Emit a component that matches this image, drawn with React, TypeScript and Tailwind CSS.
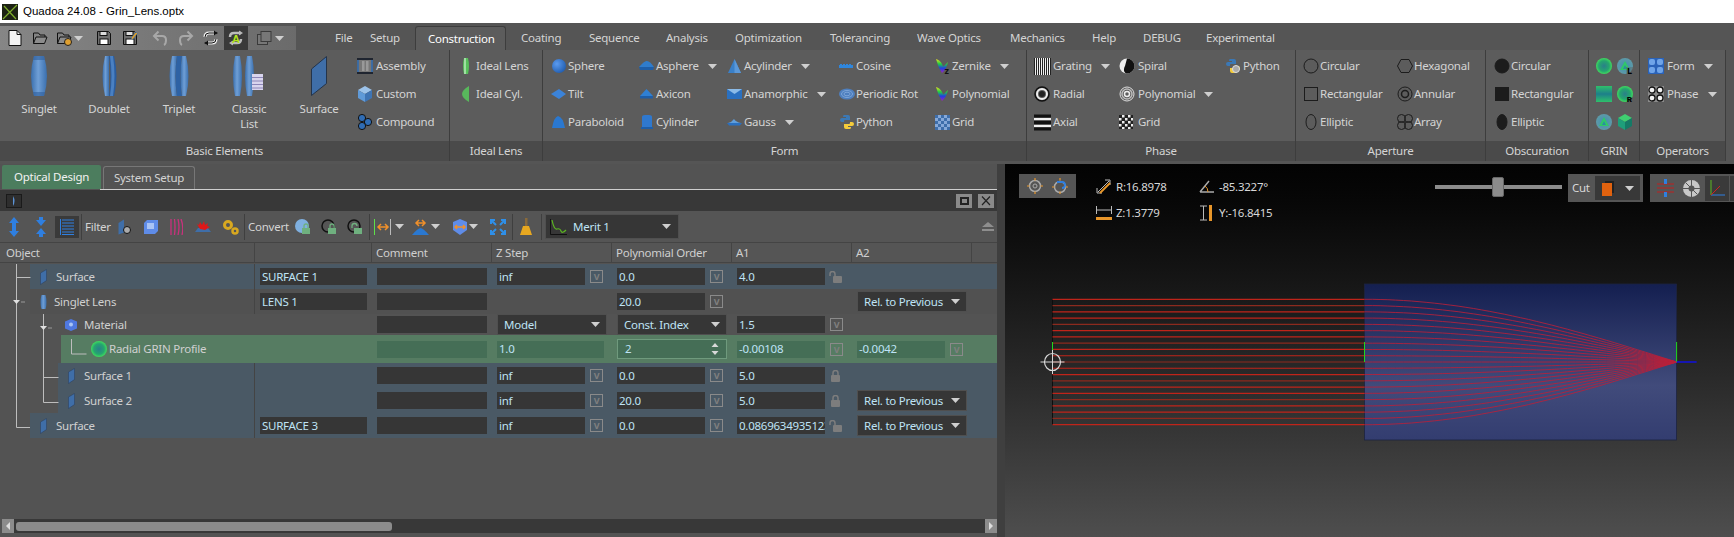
import type { ReactNode } from "react";

const FONT = "font-['Noto_Sans','Open_Sans',sans-serif]";

function Svg({ w = 16, h = 16, className = "", children }: { w?: number; h?: number; className?: string; children: ReactNode }) {
  return (
    <svg width={w} height={h} viewBox={`0 0 ${w} ${h}`} className={`shrink-0 ${className}`} fill="none">
      {children}
    </svg>
  );
}

function Defs() {
  return (
    <svg className="absolute h-0 w-0">
      <defs>
        <linearGradient id="lens" x1="0" x2="1" y1="0" y2="0">
          <stop offset="0" stopColor="#3a6fae" />
          <stop offset="0.45" stopColor="#6f9fd6" />
          <stop offset="1" stopColor="#3a6fae" />
        </linearGradient>
        <radialGradient id="ball" cx="0.35" cy="0.35" r="0.8">
          <stop offset="0" stopColor="#5b9bf0" />
          <stop offset="1" stopColor="#1a56a8" />
        </radialGradient>
        <radialGradient id="grin" cx="0.5" cy="0.5" r="0.5">
          <stop offset="0" stopColor="#2a7f8a" />
          <stop offset="0.65" stopColor="#25a56f" />
          <stop offset="1" stopColor="#3fdc5e" />
        </radialGradient>
        <radialGradient id="grinCone" cx="0.5" cy="0.5" r="0.5">
          <stop offset="0" stopColor="#3f8fb0" />
          <stop offset="1" stopColor="#5e9aa8" />
        </radialGradient>
        <linearGradient id="grinV" x1="0" x2="0" y1="0" y2="1">
          <stop offset="0" stopColor="#2fc06a" />
          <stop offset="0.5" stopColor="#1d7f8a" />
          <stop offset="1" stopColor="#2fc06a" />
        </linearGradient>
        <linearGradient id="rainbow" x1="0" x2="0" y1="0" y2="1">
          <stop offset="0" stopColor="#e8e020" />
          <stop offset="0.35" stopColor="#20d040" />
          <stop offset="0.65" stopColor="#2040e0" />
          <stop offset="1" stopColor="#a020c0" />
        </linearGradient>
        <linearGradient id="blueRect" x1="0" x2="0" y1="0" y2="1">
          <stop offset="0" stopColor="#141f50" />
          <stop offset="0.65" stopColor="#414b7b" />
          <stop offset="1" stopColor="#333d70" />
        </linearGradient>
      </defs>
    </svg>
  );
}

function Caret({ className = "" }: { className?: string }) {
  return (
    <svg width="9" height="5" viewBox="0 0 9 5" className={`shrink-0 ${className}`}>
      <path d="M0 0h9L4.500 5z" fill="#cfcfcf" />
    </svg>
  );
}

/* ---- large lenses ---- */
const LensSinglet = () => (
  <Svg w={16} h={40}>
    <path d="M3 0h10q6 20 0 40H3Q-3 20 3 0z" fill="url(#lens)" />
    <path d="M3 0h10l1 4H2zM2 36h12l-1 4H3z" fill="#2f5f9c" fillOpacity="0.6" />
  </Svg>
);
const LensDoublet = () => (
  <Svg w={15} h={40}>
    <path d="M3 0h4v40H3Q-2 20 3 0z" fill="url(#lens)" />
    <path d="M7 0h5q5 20 0 40H7q3-20 0-40z" fill="#2a5da0" />
    <path d="M8 0h3q3 20 0 40H8q3-20 0-40z" fill="#4a80c2" />
  </Svg>
);
const LensTriplet = () => (
  <Svg w={20} h={40}>
    <path d="M3 0h5q-3 20 0 40H3Q-2 20 3 0z" fill="url(#lens)" />
    <path d="M8 0h5q-3 20 0 40H8q-3-20 0-40z" fill="#2e62a4" />
    <path d="M13 0h4q5 20 0 40h-4q-3-20 0-40z" fill="url(#lens)" />
  </Svg>
);
const LensClassic = () => (
  <Svg w={32} h={40}>
    <path d="M2 0h5q4 20 0 40H2Q-2 20 2 0z" fill="url(#lens)" />
    <path d="M14 0h5q4 20 0 40h-5q-4-20 0-40z" fill="url(#lens)" />
    <rect x="19" y="18" width="11" height="16" fill="#d9d5ee" />
    <path d="M19 21.500h11M19 25h11M19 28.500h11M19 32h11" stroke="#8d86b8" />
  </Svg>
);
const SurfaceBig = () => (
  <Svg w={16} h={40}>
    <path d="M.5 13 15.500.5v27L.5 39.500z" fill="#3f6ea8" stroke="#24344a" />
  </Svg>
);

/* ---- ribbon small icons ---- */
const Assembly = () => (
  <Svg w={16} h={16}>
    <rect x="0.500" y="1" width="15" height="14" fill="#777" />
    <rect x="5" y="3" width="2.500" height="10" fill="#999" />
    <rect x="9" y="3" width="2.500" height="10" fill="#999" />
    <path d="M0 1h16M0 15h16" stroke="#1f2530" strokeWidth="2" />
    <path d="M1 2v12M15 2v12" stroke="#2d6bb3" strokeWidth="1.500" />
  </Svg>
);
const CubeIcon = ({ a = "#5f9ad8", b = "#9cc3ea", c = "#3e74b4" }: { a?: string; b?: string; c?: string }) => (
  <Svg w={16} h={16}>
    <path d="M8 0l7 4-7 4-7-4z" fill={b} />
    <path d="M1 4l7 4v8l-7-4z" fill={a} />
    <path d="M15 4l-7 4v8l7-4z" fill={c} />
  </Svg>
);
const Compound = () => (
  <Svg w={16} h={16}>
    {[[5, 4], [11, 8], [5, 12]].map(([x, y]) => (
      <circle key={`${x}${y}`} cx={x} cy={y} r="3.600" fill="#2f6cb4" stroke="#111" />
    ))}
  </Svg>
);
const IdealLens = () => (
  <Svg w={8} h={18}>
    <path d="M2 1h4q2 8 0 16H2Q0 9 2 1z" fill="#58c05c" />
    <rect x="2" y="1" width="2" height="16" fill="#9fe0a2" />
  </Svg>
);
const IdealCyl = () => (
  <Svg w={8} h={18}>
    <path d="M7 1v16Q0 13 0 9T7 1z" fill="#58b85c" />
  </Svg>
);
const Sphere = () => (
  <Svg>
    <circle cx="8" cy="8" r="7" fill="url(#ball)" />
  </Svg>
);
const Tilt = () => (
  <Svg>
    <path d="M0 8l8-5 7 5-7 5z" fill="#3b83d9" />
  </Svg>
);
const Paraboloid = () => (
  <Svg>
    <path d="M1 14Q3 3 7 2q5 1 7 12z" fill="#2a78d0" />
  </Svg>
);
const Asphere = () => (
  <Svg>
    <path d="M0 9Q6 2 8 3q3 0 7 6z" fill="#2f7ccc" />
    <path d="M0 9h15l-1 3H1z" fill="#1e5ea8" />
  </Svg>
);
const Axicon = () => (
  <Svg>
    <path d="M1 10l6.500-7L14 10z" fill="#2f80d4" />
    <path d="M1 10h13v2.500H1z" fill="#1e5ea8" />
  </Svg>
);
const Cylinder = () => (
  <Svg>
    <path d="M3 3q0-2 3-2h4q3 0 3 2v10H3z" fill="#2f78ce" />
    <path d="M2 13h12v2H2z" fill="#1e5ea8" />
  </Svg>
);
const Acylinder = () => (
  <Svg>
    <path d="M1 15 7.500 1 14 15z" fill="#3a80c8" />
    <path d="M7.500 1 14 15H7.500z" fill="#5b98d8" />
  </Svg>
);
const Anamorphic = () => (
  <Svg>
    <path d="M0 3h15v10H0z" fill="#2a70c0" />
    <path d="M0 3l7.500 5L15 3z" fill="#8bbbe8" />
  </Svg>
);
const Gauss = () => (
  <Svg>
    <path d="M1 9q4-1 6-4 2 3 7 4z" fill="#5f9edc" />
    <path d="M0 9h15l-2 2.500H2z" fill="#2a70c0" />
  </Svg>
);
const Cosine = () => (
  <Svg>
    <path d="M0 7h1v-1h2v1h1v-1h2v1h1v-1h2v1h1v-1h2v1h2v3H0z" fill="#2f86dc" />
  </Svg>
);
const PeriodicRot = () => (
  <Svg>
    <ellipse cx="8" cy="8" rx="8" ry="5.500" fill="#4e7fbe" />
    <ellipse cx="8" cy="8" rx="5.500" ry="3.500" stroke="#7ba4d8" />
    <ellipse cx="8" cy="8" rx="3" ry="1.800" stroke="#7ba4d8" />
  </Svg>
);
const PythonLogo = ({ gear = false }: { gear?: boolean }) => (
  <Svg>
    <path d="M5 1h4q2 0 2 2v3H6q-1 0-1 1v1H3Q1 8 1 6q0-2 2-2h4V3H4q0-2 1-2z" fill="#3b78b5" />
    <path d="M11 15H7q-2 0-2-2v-3h5q1 0 1-1V8h2q2 0 2 2t-2 2H9v1h3q0 2-1 2z" fill="#f5cc3a" />
    {gear && <circle cx="11" cy="11" r="3.500" fill="#aaa" stroke="#ddd" />}
  </Svg>
);
const Zernike = ({ z = true }: { z?: boolean }) => (
  <Svg>
    <path d="M1 1q4 1 6 5 1 3 2 2l4-4q-2 8-6 11Q3 9 1 1z" fill="url(#rainbow)" />
    {z && <text x="9.500" y="15.500" fontSize="9" fontWeight="700" fill="#111">z</text>}
  </Svg>
);
const BlueGrid = () => (
  <Svg w={15} h={15}>
    <rect width="15" height="15" fill="#3e6eaa" />
    {[0, 3, 6, 9, 12].flatMap((x, i) =>
      [0, 3, 6, 9, 12].map((y, j) => ((i + j) % 2 ? <rect key={`${x}-${y}`} x={x} y={y} width="3" height="3" fill="#85a8d8" /> : null))
    )}
  </Svg>
);

/* phase */
const Grating = () => (
  <Svg w={17} h={17}>
    <rect width="17" height="17" fill="#222" />
    {[1, 3, 5, 7, 9, 11, 13, 15].map((x) => (
      <path key={x} d={`M${x + 0.5} 0v17`} stroke="#f0f0f0" />
    ))}
  </Svg>
);
const Radial = () => (
  <Svg>
    <circle cx="8" cy="8" r="7" stroke="#111" strokeWidth="1.500" />
    <circle cx="8" cy="8" r="5" stroke="#eee" strokeWidth="2" />
    <circle cx="8" cy="8" r="3" fill="#222" />
  </Svg>
);
const Axial = () => (
  <Svg w={17} h={17}>
    <path d="M0 2h17M0 8.500h17M0 15h17" stroke="#111" strokeWidth="3" />
    <path d="M0 5h17M0 12h17" stroke="#f0f0f0" strokeWidth="2" />
  </Svg>
);
const Spiral = () => (
  <Svg>
    <circle cx="8" cy="8" r="7.500" fill="#eee" />
    <path d="M8 .5a7.500 7.500 0 0 1 0 15c-3 0-4-4-2-7.500z" fill="#111" />
  </Svg>
);
const PolyPhase = () => (
  <Svg>
    <circle cx="8" cy="8" r="7" stroke="#ddd" />
    <circle cx="8" cy="8" r="5" stroke="#bbb" strokeWidth="1.500" />
    <circle cx="8" cy="8" r="2.500" stroke="#eee" strokeWidth="1.500" />
  </Svg>
);
const BWGrid = () => (
  <Svg w={14} h={14}>
    <rect width="14" height="14" fill="#222" />
    {[0, 3, 6, 9, 12].flatMap((x, i) =>
      [0, 3, 6, 9, 12].map((y, j) => ((i + j) % 2 ? <rect key={`${x}-${y}`} x={x} y={y} width="2.500" height="2.500" fill="#eee" /> : null))
    )}
  </Svg>
);

/* aperture */
const ApCircle = ({ fill = "none" }: { fill?: string }) => (
  <Svg>
    <circle cx="8" cy="8" r="7" stroke="#1c1c1c" fill={fill} />
  </Svg>
);
const ApRect = ({ fill = "none" }: { fill?: string }) => (
  <Svg>
    <rect x="1.500" y="1.500" width="13" height="13" stroke="#1c1c1c" fill={fill} />
  </Svg>
);
const ApEllipse = ({ fill = "none" }: { fill?: string }) => (
  <Svg>
    <ellipse cx="8" cy="8" rx="5" ry="7.500" stroke="#1c1c1c" fill={fill} />
  </Svg>
);
const ApHex = () => (
  <Svg>
    <path d="M4 1.500h8L15.500 8 12 14.500H4L.5 8z" stroke="#1c1c1c" />
  </Svg>
);
const ApAnnular = () => (
  <Svg>
    <circle cx="8" cy="8" r="7" stroke="#1c1c1c" />
    <circle cx="8" cy="8" r="3.500" stroke="#1c1c1c" strokeWidth="1.500" />
  </Svg>
);
const ApArray = () => (
  <Svg>
    {[[4.500, 4.500], [11.500, 4.500], [4.500, 11.500], [11.500, 11.500]].map(([x, y]) => (
      <circle key={`${x}${y}`} cx={x} cy={y} r="4" stroke="#1c1c1c" />
    ))}
  </Svg>
);

/* grin */
const GrinCircle = () => (
  <Svg>
    <circle cx="8" cy="8" r="8" fill="url(#grin)" />
  </Svg>
);
const GrinCone = ({ label }: { label?: string }) => (
  <Svg>
    <circle cx="8" cy="8" r="8" fill="url(#grinCone)" />
    <path d="M3 12l5-9 5 9z" fill="#30c868" />
    <path d="M6 11l2-4 2 4z" fill="#2a8fa0" />
    {label && (
      <>
        <rect x="9" y="9" width="7" height="7" fill="#5c5c5c" fillOpacity="0.4" />
        <text x="10" y="16" fontSize="9" fontWeight="700" fill="#000">{label}</text>
      </>
    )}
  </Svg>
);
const GrinRect = () => (
  <Svg>
    <rect width="16" height="16" fill="url(#grinV)" />
  </Svg>
);
const GrinCut = () => (
  <Svg>
    <circle cx="8" cy="8" r="8" fill="url(#grin)" />
    <text x="9.500" y="16.500" fontSize="9" fontWeight="700" fill="#000">R</text>
  </Svg>
);

/* operators */
const FormOp = () => (
  <Svg>
    <rect width="16" height="16" fill="#2a62b8" />
    {[[1, 1], [9, 1], [1, 9], [9, 9]].map(([x, y]) => (
      <rect key={`${x}${y}`} x={x} y={y} width="6" height="6" rx="2" fill="#6fa4e8" />
    ))}
  </Svg>
);
const PhaseOp = () => (
  <Svg>
    <rect width="16" height="16" fill="#8a8a8a" />
    {[[4, 4], [12, 4], [4, 12], [12, 12]].map(([x, y]) => (
      <circle key={`${x}${y}`} cx={x} cy={y} r="3" fill="#f2f2f2" stroke="#111" strokeWidth="1.300" />
    ))}
  </Svg>
);

/* ---- ribbon pieces ---- */
function Large({ icon, label, second }: { icon: ReactNode; label: string; second?: string }) {
  return (
    <div className="flex w-[70px] flex-col items-center pt-[4px]">
      <div className="flex h-[40px] items-center">{icon}</div>
      <div className="mt-[5px] text-center leading-[15px]">
        {label}
        {second && <div>{second}</div>}
      </div>
    </div>
  );
}

function Item({ icon, label, caret, iw = "w-[17px]" }: { icon: ReactNode; label: string; caret?: string; iw?: string }) {
  return (
    <div className="flex h-[28px] items-center whitespace-nowrap">
      <div className={`${iw} shrink-0`}>{icon}</div>
      <span>{label}</span>
      {caret && <Caret className={caret} />}
    </div>
  );
}

function Section({ w, label, className = "", children }: { w: string; label: string; className?: string; children: ReactNode }) {
  return (
    <div className={`${w} flex shrink-0 flex-col border-r border-[#3d3d3d]`}>
      <div className={`flex h-[91px] pt-[2px] ${className}`}>{children}</div>
      <div className="flex h-[20px] items-center justify-center bg-[#4a4a4a]">{label}</div>
    </div>
  );
}

function Ribbon() {
  return (
    <div className="flex h-[111px] bg-[#5c5c5c] text-[11.5px] tracking-[-0.25px] text-[#d4d4d4]">
      <Section w="w-[450px]" label="Basic Elements" className="pl-[4px]">
        <Large icon={<LensSinglet />} label="Singlet" />
        <Large icon={<LensDoublet />} label="Doublet" />
        <Large icon={<LensTriplet />} label="Triplet" />
        <Large icon={<LensClassic />} label="Classic" second="List" />
        <Large icon={<SurfaceBig />} label="Surface" />
        <div className="ml-[3px]">
          <Item iw="w-[19px]" icon={<Assembly />} label="Assembly" />
          <Item iw="w-[19px]" icon={<CubeIcon />} label="Custom" />
          <Item iw="w-[19px]" icon={<Compound />} label="Compound" />
        </div>
      </Section>
      <Section w="w-[93px]" label="Ideal Lens" className="pl-[12px]">
        <div>
          <Item iw="w-[14px]" icon={<IdealLens />} label="Ideal Lens" />
          <Item iw="w-[14px]" icon={<IdealCyl />} label="Ideal Cyl." />
        </div>
      </Section>
      <Section w="w-[484px]" label="Form" className="pl-[8px]">
        <div className="w-[88px]">
          <Item icon={<Sphere />} label="Sphere" />
          <Item icon={<Tilt />} label="Tilt" />
          <Item icon={<Paraboloid />} label="Paraboloid" />
        </div>
        <div className="w-[88px]">
          <Item icon={<Asphere />} label="Asphere" caret="ml-[9px]" />
          <Item icon={<Axicon />} label="Axicon" />
          <Item icon={<Cylinder />} label="Cylinder" />
        </div>
        <div className="w-[112px]">
          <Item icon={<Acylinder />} label="Acylinder" caret="ml-[9px]" />
          <Item icon={<Anamorphic />} label="Anamorphic" caret="ml-[9px]" />
          <Item icon={<Gauss />} label="Gauss" caret="ml-[9px]" />
        </div>
        <div className="w-[96px]">
          <Item icon={<Cosine />} label="Cosine" />
          <Item icon={<PeriodicRot />} label="Periodic Rot" />
          <Item icon={<PythonLogo />} label="Python" />
        </div>
        <div>
          <Item icon={<Zernike />} label="Zernike" caret="ml-[9px]" />
          <Item icon={<Zernike z={false} />} label="Polynomial" />
          <Item icon={<BlueGrid />} label="Grid" />
        </div>
      </Section>
      <Section w="w-[269px]" label="Phase" className="pl-[7px]">
        <div className="w-[85px]">
          <Item iw="w-[19px]" icon={<Grating />} label="Grating" caret="ml-[9px]" />
          <Item iw="w-[19px]" icon={<Radial />} label="Radial" />
          <Item iw="w-[19px]" icon={<Axial />} label="Axial" />
        </div>
        <div className="w-[106px]">
          <Item iw="w-[19px]" icon={<Spiral />} label="Spiral" />
          <Item iw="w-[19px]" icon={<PolyPhase />} label="Polynomial" caret="ml-[9px]" />
          <Item iw="w-[19px]" icon={<BWGrid />} label="Grid" />
        </div>
        <Item iw="w-[18px]" icon={<PythonLogo gear />} label="Python" />
      </Section>
      <Section w="w-[190px]" label="Aperture" className="pl-[7px]">
        <div className="w-[94px]">
          <Item icon={<ApCircle />} label="Circular" />
          <Item icon={<ApRect />} label="Rectangular" />
          <Item icon={<ApEllipse />} label="Elliptic" />
        </div>
        <div>
          <Item icon={<ApHex />} label="Hexagonal" />
          <Item icon={<ApAnnular />} label="Annular" />
          <Item icon={<ApArray />} label="Array" />
        </div>
      </Section>
      <Section w="w-[103px]" label="Obscuration" className="pl-[8px]">
        <div>
          <Item icon={<ApCircle fill="#1c1c1c" />} label="Circular" />
          <Item icon={<ApRect fill="#1c1c1c" />} label="Rectangular" />
          <Item icon={<ApEllipse fill="#1c1c1c" />} label="Elliptic" />
        </div>
      </Section>
      <Section w="w-[51px]" label="GRIN" className="pl-[7px]">
        <div className="grid grid-cols-[21px_16px] grid-rows-[28px_28px_28px] items-center">
          <GrinCircle />
          <GrinCone label="L" />
          <GrinRect />
          <GrinCut />
          <GrinCone />
          <CubeIcon a="#1e9e7a" b="#3fcf70" c="#157a66" />
        </div>
      </Section>
      <Section w="w-[86px]" label="Operators" className="pl-[8px]">
        <div>
          <Item iw="w-[19px]" icon={<FormOp />} label="Form" caret="ml-[10px]" />
          <Item iw="w-[19px]" icon={<PhaseOp />} label="Phase" caret="ml-[10px]" />
        </div>
      </Section>
      <div className="flex-1 bg-[#555]" />
    </div>
  );
}

/* ---- quick access bar ---- */
const QuickIcon = ({ children, className = "" }: { children: ReactNode; className?: string }) => (
  <svg width="16" height="16" viewBox="0 0 16 16" fill="none" className={`shrink-0 ${className}`}>
    {children}
  </svg>
);

function QuickBar() {
  const save = (
    <>
      <path d="M1.500 1.500h11l2 2v11h-13z" fill="#6e6e6e" stroke="#111" />
      <rect x="4" y="1.500" width="7" height="4" fill="#ddd" stroke="#111" />
      <rect x="4" y="9" width="8" height="5.500" fill="#fff" stroke="#111" />
    </>
  );
  return (
    <div className="flex h-[24px] w-[296px] items-center bg-gradient-to-r from-[#868686] to-[#6b6b6b] pl-[7px]">
      <QuickIcon>
        <path d="M2 .5h8l4 4v11H2z" fill="#f4f4f4" stroke="#111" />
        <path d="M10 .5v4h4" stroke="#111" />
      </QuickIcon>
      <QuickIcon className="ml-[9px]">
        <path d="M1.500 13.500V3h5l1.500 2h5v2" stroke="#111" />
        <path d="M1.500 13.500 4 7h11l-2.500 6.500z" fill="#8c8c8c" stroke="#111" />
      </QuickIcon>
      <QuickIcon className="ml-[8px]">
        <path d="M1.500 13.500V3h5l1.500 2h5v2" stroke="#111" />
        <path d="M1.500 13.500 4 7h11l-2.500 6.500z" fill="#8c8c8c" stroke="#111" />
        <circle cx="12" cy="12" r="3.500" fill="#e0a030" stroke="#222" />
      </QuickIcon>
      <Caret className="ml-[2px]" />
      <QuickIcon className="ml-[13px]">{save}</QuickIcon>
      <QuickIcon className="ml-[10px]">
        {save}
        <path d="M9 8l5-6 1.500 1.500-5 6z" fill="#e8a020" stroke="#2b6fc0" strokeWidth="0.600" />
      </QuickIcon>
      <QuickIcon className="ml-[14px]">
        <path d="M3 6h7q4 0 4 4t-2 5" stroke="#a8a8a8" strokeWidth="2" />
        <path d="M6.500 1.500 2 6l4.500 4.500" stroke="#a8a8a8" strokeWidth="2" />
      </QuickIcon>
      <QuickIcon className="ml-[10px]">
        <path d="M13 6H6q-4 0-4 4t2 5" stroke="#a8a8a8" strokeWidth="2" />
        <path d="M9.500 1.500 14 6l-4.500 4.500" stroke="#a8a8a8" strokeWidth="2" />
      </QuickIcon>
      <QuickIcon className="ml-[9px]">
        <path d="M2 7q0-4 4-4h7M13 9q0 4-4 4H3" stroke="#eee" strokeWidth="3" />
        <path d="M2 7q0-4 4-4h7M13 9q0 4-4 4H3" stroke="#111" strokeWidth="1" />
        <path d="M11 .5 15 3l-4 2.500zM5 10.500 1 13l4 2.500z" fill="#111" />
      </QuickIcon>
      <div className="ml-[5px] flex h-[24px] w-[24px] items-center justify-center bg-[#3a3a3a]">
        <QuickIcon>
          <path d="M2 7q0-4 4-4h7M13 9q0 4-4 4H3" stroke="#bbb" strokeWidth="2.500" />
          <path d="M11 .5 15 3l-4 2.500zM5 10.500 1 13l4 2.500z" fill="#bbb" />
          <text x="4" y="13" fontSize="11" fontWeight="700" fill="#b5e61d" fontFamily="Liberation Sans">A</text>
        </QuickIcon>
      </div>
      <QuickIcon className="ml-[8px]">
        <rect x="1.500" y="4.500" width="10" height="10" fill="#777" stroke="#3a3a3a" />
        <rect x="5" y="1.500" width="10" height="10" fill="#777" stroke="#3a3a3a" />
      </QuickIcon>
      <Caret className="ml-[3px]" />
    </div>
  );
}

const TABS = [
  { label: "File", cls: "w-[35px]" },
  { label: "Setup", cls: "w-[45px]" },
  { label: "Construction", cls: "w-[91px] pl-[12px] bg-[#5c5c5c] border border-b-0 border-[#3d3d3d] rounded-t-[3px] text-white" },
  { label: "Coating", cls: "w-[83px] pl-[15px]" },
  { label: "Sequence", cls: "w-[77px]" },
  { label: "Analysis", cls: "w-[69px]" },
  { label: "Optimization", cls: "w-[95px]" },
  { label: "Tolerancing", cls: "w-[87px]" },
  { label: "Wave Optics", cls: "w-[93px]" },
  { label: "Mechanics", cls: "w-[82px]" },
  { label: "Help", cls: "w-[51px]" },
  { label: "DEBUG", cls: "w-[63px]" },
  { label: "Experimental", cls: "w-[90px]" },
];

function TitleBar() {
  return (
    <div className="flex h-[23px] items-center bg-white pl-[2px]">
      <svg width="16" height="16" viewBox="0 0 16 16">
        <rect width="16" height="16" fill="#1d2214" />
        <path d="M1 15 15 1M2 2l12 13" stroke="#7fae2c" strokeWidth="1.200" />
      </svg>
      <span className="ml-[5px] font-['Liberation_Sans',sans-serif] text-[11.5px] text-black">Quadoa 24.08 - Grin_Lens.optx</span>
    </div>
  );
}

function TabBar() {
  return (
    <div className="flex h-[27px] bg-[#555] pt-[3px] text-[11.5px] tracking-[-0.25px] text-[#d4d4d4]">
      <QuickBar />
      <div className="ml-[39px] flex">
        {TABS.map((t) => (
          <div key={t.label} className={`flex h-[24px] items-center whitespace-nowrap ${t.cls}`}>
            {t.label}
          </div>
        ))}
      </div>
    </div>
  );
}

/* ---- table ---- */
function Vbox() {
  return (
    <div className="ml-[5px] flex h-[13px] w-[13px] shrink-0 items-center justify-center border border-[#8a8a8a] text-[9px] font-bold leading-none text-[#808080]">
      V
    </div>
  );
}

function Lock({ open }: { open?: boolean }) {
  return (
    <svg width="13" height="12" viewBox="0 0 13 12" fill="none" className="ml-[4px] shrink-0">
      <rect x={open ? 4 : 2} y="5" width="9" height="7" fill="#7d7d7d" rx="1" />
      {open ? (
        <path d="M1 5V3a2.500 2.500 0 0 1 5 0v2" stroke="#7d7d7d" strokeWidth="1.500" />
      ) : (
        <path d="M4 5V3a2.500 2.500 0 0 1 5 0v2" stroke="#7d7d7d" strokeWidth="1.500" />
      )}
    </svg>
  );
}

function Input({ v, bg = "bg-[#363636]", w = "w-[88px]" }: { v?: string; bg?: string; w?: string }) {
  return (
    <div className={`${w} ${bg} flex h-[17px] shrink-0 items-center overflow-hidden whitespace-nowrap pl-[2px] text-[#bfe3f5]`}>{v}</div>
  );
}

function Combo({ v, w = "w-[110px]" }: { v: string; w?: string }) {
  return (
    <div className={`${w} flex h-[21px] shrink-0 items-center justify-between border border-[#4f4f4f] bg-[#363636] pl-[6px] pr-[6px] text-[#bfe3f5]`}>
      {v}
      <Caret />
    </div>
  );
}

function Cell({ w = "w-[120px]", children }: { w?: string; children?: ReactNode }) {
  return <div className={`${w} flex shrink-0 items-center pl-[5px]`}>{children}</div>;
}

function SurfIcon() {
  return (
    <svg width="7" height="16" viewBox="0 0 7 16" className="shrink-0">
      <path d="M.5 4 6.500.5v11L.5 15.500z" fill="#3f6ea8" stroke="#2a3f5c" strokeWidth="0.500" />
    </svg>
  );
}

function ObjName({ icon, name, gap = "ml-[9px]" }: { icon: ReactNode; name: string; gap?: string }) {
  return (
    <div className="flex min-w-0 flex-1 items-center border-r border-[#444] pl-[10px]">
      {icon}
      <span className={`${gap} whitespace-nowrap`}>{name}</span>
    </div>
  );
}

const BLUE = "bg-[#4a5965]";
const End = () => <div className="w-[25px] shrink-0" />;

function Row({ offset, bg, h = "h-[25px]", children }: { offset: string; bg: string; h?: string; children: ReactNode }) {
  return (
    <div className={`flex ${h}`}>
      <div className={`${offset} shrink-0`} />
      <div className={`flex min-w-0 flex-1 ${bg}`}>{children}</div>
    </div>
  );
}

function Tree() {
  return (
    <svg width="100" height="174" viewBox="0 0 100 174" className="absolute left-0 top-0" fill="none">
      <path d="M16.500 0v163.500H30M16.500 13.500h14M43.500 50v88.500h15M43.500 113.500h15M71.500 75v15h15" stroke="#bdbdbd" />
      <path d="M13 36h7l-3.500 4zM40 62h7l-3.500 4z" fill="#e0e0e0" />
      <path d="M21 38h4M48 64h4" stroke="#9a9a9a" />
    </svg>
  );
}

function Table() {
  return (
    <div className="relative text-[11.5px] tracking-[-0.25px] text-[#d0d0d0]">
      <Row offset="w-[30px]" bg={BLUE}>
        <ObjName icon={<SurfIcon />} name="Surface" />
        <Cell w="w-[117px]"><Input v="SURFACE 1" w="w-[107px]" /></Cell>
        <Cell><Input w="w-[110px]" /></Cell>
        <Cell><Input v="inf" /><Vbox /></Cell>
        <Cell><Input v="0.0" /><Vbox /></Cell>
        <Cell><Input v="4.0" /><Lock open /></Cell>
        <Cell />
        <End />
      </Row>
      <Row offset="w-[30px]" bg="bg-[#515151]">
        <ObjName
          gap="ml-[7px]"
          icon={
            <svg width="7" height="16" viewBox="0 0 7 16" className="shrink-0">
              <path d="M1.500 1h4q2 7 0 14h-4q-2-7 0-14z" fill="url(#lens)" />
            </svg>
          }
          name="Singlet Lens"
        />
        <Cell w="w-[117px]"><Input v="LENS 1" w="w-[107px]" /></Cell>
        <Cell><Input w="w-[110px]" /></Cell>
        <Cell />
        <Cell><Input v="20.0" /><Vbox /></Cell>
        <Cell />
        <Cell><Combo v="Rel. to Previous" /></Cell>
        <End />
      </Row>
      <Row offset="w-[65px]" bg="" h="h-[21px]">
        <div className="flex min-w-0 flex-1 items-center">
          <svg width="12" height="12" viewBox="0 0 12 12" className="shrink-0">
            <path d="M6 0l6 2.500v7L6 12 0 9.500v-7z" fill="#4f78e0" />
            <circle cx="6" cy="5.500" r="2" fill="#a9c4f5" />
          </svg>
          <span className="ml-[7px] whitespace-nowrap">Material</span>
        </div>
        <Cell><Input w="w-[110px]" /></Cell>
        <Cell><Combo v="Model" /></Cell>
        <Cell><Combo v="Const. Index" /></Cell>
        <Cell><Input v="1.5" /><Vbox /></Cell>
        <div className="w-[145px] shrink-0" />
      </Row>
      <Row offset="w-[61px]" bg="bg-[#567c62]" h="h-[28px]">
        <div className="flex min-w-0 flex-1 items-center pl-[30px]">
          <svg width="16" height="16" viewBox="0 0 16 16" className="shrink-0">
            <circle cx="8" cy="8" r="8" fill="url(#grin)" />
          </svg>
          <span className="ml-[2px] whitespace-nowrap">Radial GRIN Profile</span>
        </div>
        <Cell><Input bg="bg-[#456e56]" w="w-[110px]" /></Cell>
        <Cell><Input v="1.0" bg="bg-[#456e56]" w="w-[107px]" /></Cell>
        <Cell>
          <div className="flex h-[20px] w-[110px] shrink-0 items-center justify-between border border-[#6f9a7d] bg-[#456e56] px-[7px] text-[#bfe3f5]">
            2
            <svg width="8" height="14" viewBox="0 0 8 14">
              <path d="M4 1l3.500 4h-7zM4 13l3.500-4h-7z" fill="#d8d8d8" />
            </svg>
          </div>
        </Cell>
        <Cell><Input v="-0.00108" bg="bg-[#456e56]" /><Vbox /></Cell>
        <Cell><Input v="-0.0042" bg="bg-[#456e56]" /><Vbox /></Cell>
        <End />
      </Row>
      <Row offset="w-[58px]" bg={BLUE}>
        <ObjName icon={<SurfIcon />} name="Surface 1" />
        <Cell w="w-[117px]" />
        <Cell><Input w="w-[110px]" /></Cell>
        <Cell><Input v="inf" /><Vbox /></Cell>
        <Cell><Input v="0.0" /><Vbox /></Cell>
        <Cell><Input v="5.0" /><Lock /></Cell>
        <Cell />
        <End />
      </Row>
      <Row offset="w-[58px]" bg={BLUE}>
        <ObjName icon={<SurfIcon />} name="Surface 2" />
        <Cell w="w-[117px]" />
        <Cell><Input w="w-[110px]" /></Cell>
        <Cell><Input v="inf" /><Vbox /></Cell>
        <Cell><Input v="20.0" /><Vbox /></Cell>
        <Cell><Input v="5.0" /><Lock /></Cell>
        <Cell><Combo v="Rel. to Previous" /></Cell>
        <End />
      </Row>
      <Row offset="w-[30px]" bg={BLUE}>
        <ObjName icon={<SurfIcon />} name="Surface" />
        <Cell w="w-[117px]"><Input v="SURFACE 3" w="w-[107px]" /></Cell>
        <Cell><Input w="w-[110px]" /></Cell>
        <Cell><Input v="inf" /><Vbox /></Cell>
        <Cell><Input v="0.0" /><Vbox /></Cell>
        <Cell><Input v="0.0869634935123" /><Lock open /></Cell>
        <Cell><Combo v="Rel. to Previous" /></Cell>
        <End />
      </Row>
      <Tree />
    </div>
  );
}

function Sep({ className = "" }: { className?: string }) {
  return <div className={`h-[26px] w-px shrink-0 bg-[#3f3f3f] ${className}`} />;
}

function ConvertIcon({ ring, open, className = "" }: { ring?: boolean; open?: boolean; className?: string }) {
  return (
    <svg width="16" height="16" viewBox="0 0 16 16" className={`shrink-0 ${className}`} fill="none">
      {ring ? <circle cx="7" cy="7" r="6" stroke="#111" strokeWidth="1.500" /> : <circle cx="7" cy="7" r="7" fill="#7fb0e0" />}
      <rect x="7" y="9" width="8" height="6" fill="#6fb07f" />
      <path d={open ? "M5 9V7a2.500 2.500 0 0 1 5 0" : "M9 9V7a2 2 0 0 1 4 0v2"} stroke="#6fb07f" strokeWidth="1.300" />
    </svg>
  );
}

function Toolbar() {
  return (
    <div className="flex h-[31px] items-center bg-[#555] text-[11.5px] tracking-[-0.25px] text-[#d4d4d4]">
      <svg width="12" height="20" viewBox="0 0 12 20" className="ml-[8px] shrink-0">
        <path d="M6 0l5 6H8v8h3l-5 6-5-6h3V6H1z" fill="#2f7fe0" />
      </svg>
      <svg width="12" height="20" viewBox="0 0 12 20" className="ml-[15px] shrink-0">
        <path d="M6 9 1 3h3V0h4v3h3zM6 11l5 6H8v3H4v-3H1z" fill="#2f7fe0" />
      </svg>
      <div className="ml-[8px] flex h-[22px] w-[24px] items-center justify-center bg-[#3a3a3a]">
        <svg width="14" height="16" viewBox="0 0 14 16">
          <path d="M2 1h12M2 4h12M2 7h12M2 10h12M2 13h12M2 15.500h12" stroke="#2f7fe0" />
          <path d="M.5 0v16" stroke="#2f7fe0" />
        </svg>
      </div>
      <Sep className="ml-[2px]" />
      <span className="ml-[3px] w-[33px]">Filter</span>
      <svg width="14" height="16" viewBox="0 0 14 16" className="shrink-0">
        <path d="M.5 4 6 .5v13L.5 15.500z" fill="#3f6ea8" />
        <circle cx="9" cy="11" r="3.500" fill="#aaa" stroke="#111" />
      </svg>
      <svg width="16" height="16" viewBox="0 0 16 16" className="ml-[11px] shrink-0">
        <path d="M4 1h11v11l-3 3H1V4z" fill="#5f8ce8" />
        <rect x="4" y="4" width="7" height="6" fill="#a9c4f5" />
      </svg>
      <svg width="13" height="16" viewBox="0 0 13 16" className="ml-[11px] shrink-0" fill="none">
        <path d="M1 0v16M4.500 0q1 8 0 16M8 0q2 8 0 16M11 0q3 8 1 16" stroke="#c8327c" strokeWidth="1.300" />
      </svg>
      <svg width="16" height="16" viewBox="0 0 16 16" className="ml-[12px] shrink-0">
        <path d="M0 13l3-4h10l3 4z" fill="#3f6ea8" />
        <path d="M2 5l2 1 1-3 2 3 2-4 1 4 3-2-1 3 3 1-5 3-5-1z" fill="#e01818" />
      </svg>
      <svg width="17" height="16" viewBox="0 0 17 16" className="ml-[11px] shrink-0" fill="none">
        <circle cx="6" cy="6" r="3.500" stroke="#d8a820" strokeWidth="3" />
        <circle cx="13" cy="12" r="2.500" stroke="#d8a820" strokeWidth="2.500" />
      </svg>
      <Sep className="ml-[5px]" />
      <span className="ml-[3px] w-[47px]">Convert</span>
      <ConvertIcon />
      <ConvertIcon ring className="ml-[10px]" />
      <ConvertIcon ring open className="ml-[10px]" />
      <Sep className="ml-[6px]" />
      <svg width="19" height="16" viewBox="0 0 19 16" className="ml-[4px] shrink-0" fill="none">
        <path d="M.5 0v16" stroke="#5fe04a" />
        <path d="M4 8h10M7 5 4 8l3 3M11 5l3 3-3 3" stroke="#f0902a" strokeWidth="1.500" />
        <path d="M16.500 0v16" stroke="#bbb" />
      </svg>
      <Caret className="ml-[2px]" />
      <svg width="17" height="16" viewBox="0 0 17 16" className="ml-[8px] shrink-0">
        <path d="M0 16q6-7 8.500-7T17 16z" fill="#2a78d0" />
        <path d="M4 4h9M7 1 4 4l3 3M10 1l3 3-3 3" stroke="#f0902a" strokeWidth="1.500" fill="none" />
      </svg>
      <Caret className="ml-[2px]" />
      <svg width="16" height="16" viewBox="0 0 16 16" className="ml-[12px] shrink-0">
        <path d="M8 0l7 3v8l-7 5-7-5V3z" fill="#5f8ce8" />
        <path d="M3 8h10M5 6 3 8l2 2M11 6l2 2-2 2" stroke="#f0902a" strokeWidth="1.500" fill="none" />
      </svg>
      <Caret className="ml-[1px]" />
      <svg width="16" height="16" viewBox="0 0 16 16" className="ml-[12px] shrink-0" fill="none">
        <path d="M1 1l5 5M15 1l-5 5M1 15l5-5M15 15l-5-5" stroke="#2f8fe8" strokeWidth="2" />
        <path d="M1 5V1h4M11 1h4v4M1 11v4h4M15 11v4h-4" stroke="#2f8fe8" strokeWidth="2" />
      </svg>
      <Sep className="ml-[6px]" />
      <svg width="12" height="17" viewBox="0 0 12 17" className="ml-[7px] shrink-0">
        <rect x="5" y="0" width="2.500" height="8" fill="#8a6a3a" />
        <path d="M3 8h6l3 9H0z" fill="#e8a820" />
      </svg>
      <Sep className="ml-[9px]" />
      <div className="ml-[3px] flex h-[25px] w-[134px] shrink-0 items-center border border-[#4f4f4f] bg-[#363636] pl-[4px] pr-[7px]">
        <svg width="17" height="16" viewBox="0 0 17 16" fill="none" className="shrink-0">
          <path d="M.5 0v15.500H17" stroke="#111" />
          <path d="M2 1q2 10 5 9t4 2 5-1" stroke="#5cb820" strokeWidth="1.200" />
        </svg>
        <span className="ml-[6px] flex-1 text-[#bfe3f5]">Merit 1</span>
        <Caret />
      </div>
      <svg width="12" height="9" viewBox="0 0 12 9" className="ml-[303px] shrink-0">
        <path d="M6 0l6 5H0zM0 7h12v2H0z" fill="#8e8e8e" />
      </svg>
    </div>
  );
}

function OpticalPanel() {
  return (
    <div className="flex w-[997px] shrink-0 flex-col bg-[#535353]">
      <div className="flex h-[25px] items-end pl-[2px] text-[11.5px] tracking-[-0.25px]">
        <div className="flex h-[24px] w-[99px] items-center justify-center rounded-t-[2px] bg-[#4c7d5e] text-[#f2f2f2]">Optical Design</div>
        <div className="ml-[2px] flex h-[23px] w-[92px] items-center justify-center rounded-t-[3px] border border-b-0 border-[#777] text-[#d4d4d4]">System Setup</div>
      </div>
      <div className="ml-[100px] h-px bg-[#cfcfcf]" />
      <div className="flex h-[21px] items-center justify-between bg-[#383838] pl-[6px] pr-[3px]">
        <svg width="16" height="14" viewBox="0 0 16 14">
          <rect x="0.500" y="0.500" width="15" height="13" fill="#2e2e2e" stroke="#1a1a1a" />
          <path d="M7 2q3 5 0 10z" fill="#5b93d6" />
        </svg>
        <div className="flex gap-[6px]">
          <div className="flex h-[14px] w-[16px] items-center justify-center bg-[#8a8a8a]">
            <div className="h-[8px] w-[9px] border-2 border-[#222]" />
          </div>
          <svg width="16" height="14" viewBox="0 0 16 14" className="bg-[#8a8a8a]">
            <path d="M4 2.500 12 11M12 2.500 4 11" stroke="#222" strokeWidth="1.200" />
          </svg>
        </div>
      </div>
      <Toolbar />
      <div className="flex h-[21px] items-center bg-[#555] text-[11.5px] tracking-[-0.25px] text-[#cfcfcf]">
        <div className="flex h-full w-[255px] items-center border-y border-r border-[#444] pl-[6px]">Object</div>
        <div className="h-full w-[117px] border-y border-r border-[#444]" />
        {["Comment", "Z Step", "Polynomial Order", "A1", "A2"].map((c) => (
          <div key={c} className="flex h-full w-[120px] items-center whitespace-nowrap border-y border-r border-[#444] pl-[4px]">{c}</div>
        ))}
        <div className="h-full flex-1 border-y border-[#444]" />
      </div>
      <div className="h-[1px]" />
      <Table />
      <div className="flex-1" />
      <div className="ml-[2px] flex h-[14px] items-center bg-[#383838]">
        <div className="flex h-full w-[12px] items-center justify-center bg-[#8c8c8c]">
          <svg width="4" height="8" viewBox="0 0 4 8"><path d="M4 0v8L0 4z" fill="#ddd" /></svg>
        </div>
        <div className="ml-[2px] h-[9px] w-[376px] rounded-[3px] bg-[#8c8c8c]" />
        <div className="flex-1" />
        <div className="flex h-full w-[12px] items-center justify-center bg-[#8c8c8c]">
          <svg width="4" height="8" viewBox="0 0 4 8"><path d="M0 0v8l4-4z" fill="#ddd" /></svg>
        </div>
      </div>
      <div className="h-[4px]" />
    </div>
  );
}

/* ---- 3d view ---- */
function Rays() {
  const cy = 198;
  const x0 = 47.5;
  const x1 = 359.5;
  const x2 = 671.6;
  const rays = Array.from({ length: 21 }, (_, i) => (i - 10) * 6.27);
  const curve = (d: number) => {
    const pts: string[] = [];
    for (let k = 0; k <= 40; k++) {
      const x = x1 + ((x2 - x1) * k) / 40;
      pts.push(`${x.toFixed(1)} ${(cy + d * Math.cos((Math.PI / 2) * (k / 40))).toFixed(1)}`);
    }
    return `M${pts.join("L")}`;
  };
  return (
    <svg width="729" height="373" viewBox="0 0 729 373" className="absolute left-0 top-0" fill="none">
      <rect x={x1} y="120" width={x2 - x1} height="156" fill="url(#blueRect)" stroke="#1d2440" strokeWidth="0.800" />
      <path d={`M${x0} 135v126`} stroke="#0d0d0d" />
      {rays.map((d, i) => (
        <g key={d}>
          <path d={`M${x0} ${cy + d}H${x1}`} stroke={i % 3 === 1 ? "#8c2a1e" : "#c0241a"} strokeWidth="1.200" />
          <path d={curve(d)} stroke="#b8203a" strokeWidth="1" strokeOpacity="0.85" />
        </g>
      ))}
      <path d={`M${x0} 178v20M${x1} 178v20M${x2} 178v20`} stroke="#1fd81f" />
      <path d={`M${x2} 198h20`} stroke="#1010e0" strokeWidth="1.500" />
      <ellipse cx={x0} cy={cy} rx="8" ry="8.500" stroke="#d8d8d8" strokeWidth="1.200" />
      <path d={`M${x0 - 12} ${cy}h24M${x0} ${cy - 12}v24`} stroke="#d8d8d8" />
    </svg>
  );
}

function Stat({ label, children }: { label: string; children: ReactNode }) {
  return (
    <div className="flex h-[26px] items-center">
      <svg width="16" height="16" viewBox="0 0 16 16" fill="none" className="shrink-0">{children}</svg>
      <span className="ml-[4px] whitespace-nowrap">{label}</span>
    </div>
  );
}

function ViewToolbar() {
  return (
    <div className="relative flex items-start pl-[14px] pt-[10px] text-[11.5px] tracking-[-0.25px] text-[#d8d8d8]">
      <div className="flex h-[24px] w-[57px] shrink-0 items-center justify-between bg-[#555] px-[8px]">
        <svg width="16" height="16" viewBox="0 0 16 16" fill="none">
          <circle cx="8" cy="8" r="5.500" stroke="#aaa" strokeWidth="1.500" />
          <circle cx="8" cy="8" r="2" stroke="#aaa" />
          <path d="M8 0v2.500M8 13.500V16M0 8h2.500M13.500 8H16" stroke="#e8962a" strokeWidth="1.200" />
        </svg>
        <svg width="16" height="16" viewBox="0 0 16 16" fill="none">
          <circle cx="8" cy="9" r="5.500" stroke="#aaa" strokeWidth="1.500" />
          <path d="M8 0v2.500M8 13.500V16M0 9h2.500M13.500 9H16" stroke="#e8962a" strokeWidth="1.200" />
          <path d="M5 4h5a3 3 0 0 1 0 6" stroke="#2f7fe0" strokeWidth="1.800" />
        </svg>
      </div>
      <div className="ml-[20px] grid shrink-0 grid-cols-[103px_130px] grid-rows-[26px_26px]">
        <Stat label="R:16.8978">
          <path d="M2 13 13 2M9 1h5v5M6 14H1V9" stroke="#bbb" />
          <path d="M4 14 14 4" stroke="#e8962a" strokeWidth="2" />
        </Stat>
        <Stat label="-85.3227°">
          <path d="M1 13 10 2M1 13h14" stroke="#aaa" strokeWidth="1.500" />
          <path d="M6 7q3 2 3 6" stroke="#e8962a" />
        </Stat>
        <Stat label="Z:1.3779">
          <path d="M.5 1v8M15.500 1v8M1 5h14" stroke="#bbb" />
          <path d="M0 12h16v3H0z" fill="#e8962a" />
        </Stat>
        <Stat label="Y:-16.8415">
          <path d="M1 1h7M1 15h7M4.500 1v14" stroke="#bbb" />
          <path d="M10 0h3v16h-3z" fill="#e8962a" />
        </Stat>
      </div>
      <div className="relative ml-[106px] mt-[3px] h-[20px] w-[127px] shrink-0">
        <div className="absolute left-0 right-0 top-[8px] h-[4px] bg-[#8c8c8c]" />
        <div className="absolute left-[57px] top-0 h-[20px] w-[12px] rounded-[2px] border border-[#666] bg-[#8c8c8c]" />
      </div>
      <div className="ml-[6px] flex h-[28px] w-[75px] shrink-0 items-center bg-[#555] pl-[4px]">
        <span>Cut</span>
        <div className="ml-[5px] flex h-[24px] w-[45px] items-center justify-between bg-[#383838] pl-[7px] pr-[6px]">
          <svg width="12" height="15" viewBox="0 0 12 15">
            <path d="M3 0h9v12h-9z" fill="#222" />
            <rect y="2" width="10" height="13" fill="#e0620f" />
          </svg>
          <Caret />
        </div>
      </div>
      <div className="ml-[7px] flex h-[28px] flex-1 items-center bg-[#555] pl-[7px]">
        <svg width="17" height="20" viewBox="0 0 17 20" className="shrink-0">
          <path d="M0 6h17M0 10h17M0 14h17" stroke="#c02020" />
          <path d="M8.500 1v5M8.500 14v5" stroke="#2f7fe0" strokeWidth="3" />
        </svg>
        <svg width="17" height="17" viewBox="0 0 17 17" className="ml-[9px] shrink-0">
          <circle cx="8.500" cy="8.500" r="8.500" fill="#c8c8c8" />
          <circle cx="8.500" cy="8.500" r="3" fill="#555" />
          <path d="M8.500 0v6M17 8.500h-6M8.500 17v-6M0 8.500h6M2.500 2.500 7 7M14.500 14.500 10 10" stroke="#555" />
        </svg>
        <div className="ml-[5px] flex h-[25px] w-[24px] shrink-0 items-center justify-center bg-[#3a3a3a]">
          <svg width="16" height="17" viewBox="0 0 16 17" fill="none">
            <path d="M2 0v15" stroke="#5cb820" />
            <path d="M2 15h14" stroke="#2f7fe0" />
            <path d="M2 15l9-9" stroke="#d02020" />
          </svg>
        </div>
        <div className="ml-[1px] h-[25px] flex-1 bg-[#3a3a3a]" />
      </div>
    </div>
  );
}

function View3D() {
  return (
    <div className="relative flex-1 overflow-hidden bg-gradient-to-b from-[#030303] to-[#4e4e4e]">
      <Rays />
      <ViewToolbar />
    </div>
  );
}

export default function App() {
  return (
    <div className={`flex h-[537px] w-[1734px] flex-col overflow-hidden bg-[#555] ${FONT}`}>
      <Defs />
      <TitleBar />
      <TabBar />
      <Ribbon />
      <div className="flex min-h-0 flex-1 pt-[3px]">
        <OpticalPanel />
        <div className="w-[8px] shrink-0 bg-[#3f3f3f]" />
        <View3D />
      </div>
    </div>
  );
}
